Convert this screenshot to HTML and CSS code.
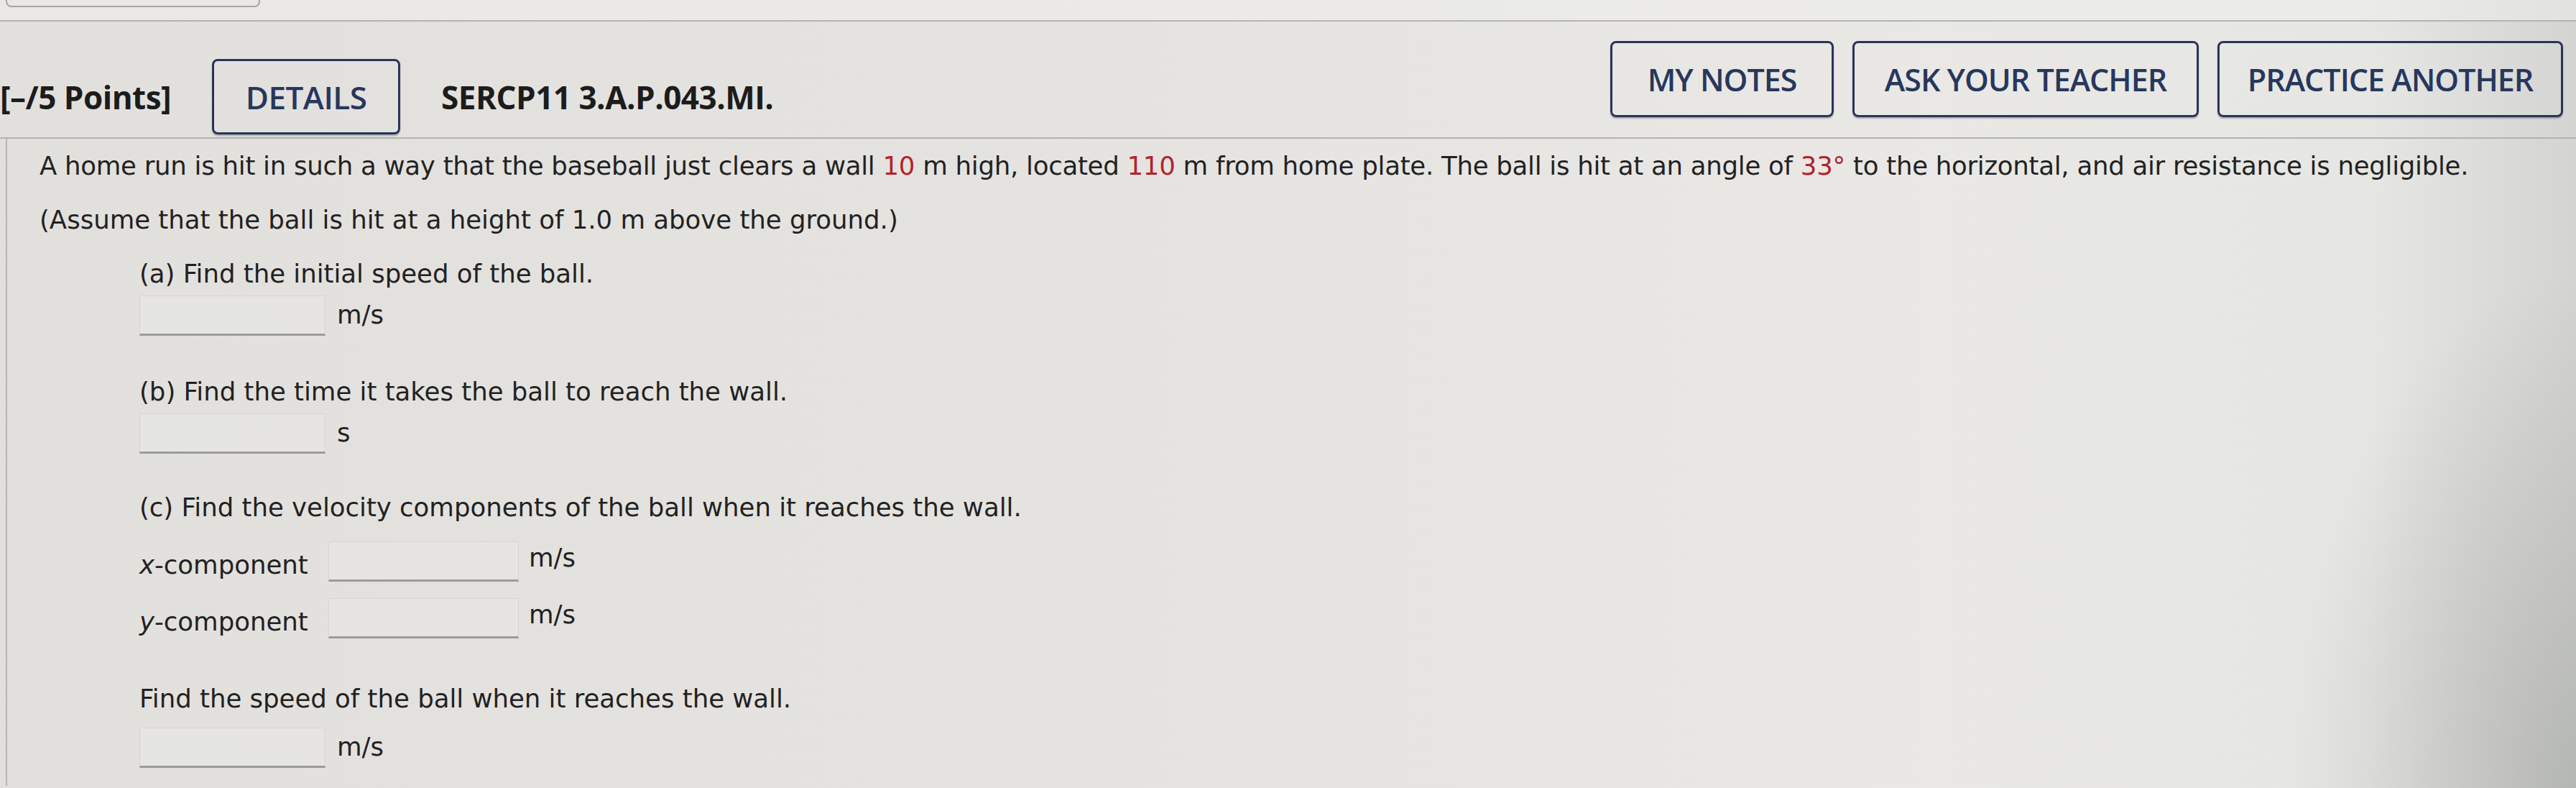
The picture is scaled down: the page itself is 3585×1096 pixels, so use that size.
FILE: index.html
```html
<!DOCTYPE html>
<html lang="en">
<head>
<meta charset="utf-8">
<title>SERCP11 3.A.P.043.MI.</title>
<link rel="stylesheet" href="styles.css">
</head>
<body>
<div class="topbar"><div class="tab"></div></div>
<header class="qhead">
  <div class="qhead-left">
    <span class="points">[–/5 Points]</span>
    <button class="btn btn-details">DETAILS</button>
    <span class="qcode">SERCP11 3.A.P.043.MI.</span>
  </div>
  <div class="qhead-right">
    <button class="btn btn-notes">MY NOTES</button>
    <button class="btn btn-ask">ASK YOUR TEACHER</button>
    <button class="btn btn-practice">PRACTICE ANOTHER</button>
  </div>
</header>
<main class="panel">
  <p class="stem"><span class="line1">A home run is hit in such a way that the baseball just clears a wall <span class="var">10</span> m high, located <span class="var">110</span> m from home plate. The ball is hit at an angle of <span class="var">33°</span> to the horizontal, and air resistance is negligible.</span><br>(Assume that the ball is hit at a height of 1.0 m above the ground.)</p>

  <div class="part part-a">
    <div class="plabel">(a) Find the initial speed of the ball.</div>
    <div class="arow"><span class="ans"></span><span class="unit">m/s</span></div>
  </div>

  <div class="part part-b">
    <div class="plabel">(b) Find the time it takes the ball to reach the wall.</div>
    <div class="arow"><span class="ans"></span><span class="unit">s</span></div>
  </div>

  <div class="part part-c">
    <div class="plabel">(c) Find the velocity components of the ball when it reaches the wall.</div>
    <div class="arow crow"><span class="clabel"><i>x</i>-component</span><span class="ans ans-c"></span><span class="unit unit-c">m/s</span></div>
    <div class="arow crow crow2"><span class="clabel"><i>y</i>-component</span><span class="ans ans-c"></span><span class="unit unit-c">m/s</span></div>
  </div>

  <div class="part part-d">
    <div class="plabel">Find the speed of the ball when it reaches the wall.</div>
    <div class="arow"><span class="ans"></span><span class="unit">m/s</span></div>
  </div>
</main>
</body>
</html>
```

FILE: styles.css
```css
html, body {
  margin: 0;
  padding: 0;
}
body {
  width: 3585px;
  height: 1096px;
  overflow: hidden;
  background:
    radial-gradient(ellipse 400px 720px at 100% 100%, rgba(150,153,151,0.5), rgba(150,153,151,0) 100%),
    linear-gradient(90deg, #e2e0dd 0%, #e5e3e0 40%, #e9e8e5 75%, #e6e6e3 92%, #d4d5d3 100%);
  color: #222222;
  font-family: "DejaVu Sans", Verdana, sans-serif;
}

.topbar {
  height: 28px;
  border-bottom: 2px solid #b4b4b2;
  background: rgba(240,239,237,0.5);
  overflow: hidden;
}
.tab {
  width: 350px;
  height: 12px;
  margin-left: 8px;
  margin-top: -4px;
  border: 2px solid #a6a6a4;
  border-top: none;
  border-radius: 0 0 8px 8px;
}

.qhead {
  display: flex;
  align-items: flex-start;
  height: 161px;
  border-bottom: 2px solid #b2b2b0;
  font-family: "Open Sans", "Liberation Sans", sans-serif;
}
.qhead-left {
  display: flex;
  align-items: center;
  gap: 57px;
  padding-top: 52px;
}
.qhead-right {
  display: flex;
  gap: 26px;
  margin-left: auto;
  padding-right: 18px;
  padding-top: 27px;
}
.points, .qcode {
  font-size: 44px;
  font-weight: 700;
  color: #1c1c1c;
  letter-spacing: -0.5px;
}
.btn {
  height: 106px;
  padding: 0;
  background: transparent;
  border: 3px solid #28355a;
  border-radius: 8px;
  color: #27375d;
  font-family: "Open Sans", "Liberation Sans", sans-serif;
  font-size: 43px;
  font-weight: 600;
  letter-spacing: -1px;
  box-shadow: 0 2px 2px rgba(0,0,0,0.25);
}
.btn-notes { width: 311px; }
.btn-ask { width: 482px; }
.btn-practice { width: 481px; }
.btn-details {
  width: 262px;
  height: 105px;
  font-size: 44px;
  letter-spacing: -0.5px;
}

.panel {
  margin-left: 8px;
  border-left: 2px solid #b7b7b5;
  padding-left: 45px;
  font-size: 35.5px;
  height: 900px;
}
.stem {
  margin: 0;
  line-height: 75px;
  white-space: nowrap;
}
.line1 {
  letter-spacing: -0.25px;
}
.var {
  color: #b3222c;
}
.part {
  margin-left: 139px;
}
.plabel {
  line-height: 60px;
}
.part-a { margin-top: 8px; }
.part-b { margin-top: 48px; }
.part-c { margin-top: 45px; }
.part-d { margin-top: 54px; }
.part-d .plabel { margin-bottom: 10px; }

.arow {
  display: flex;
  align-items: center;
  gap: 16px;
}
.ans {
  display: block;
  width: 257px;
  height: 52px;
  border: 1px solid #d6d5d2;
  border-bottom: 3px solid #9c9c9a;
  background: rgba(232,231,228,0.6);
}
.unit {
  margin-top: -4px;
}
.crow {
  margin-top: 17px;
  gap: 0;
}
.crow2 {
  margin-top: 23px;
}
.clabel {
  width: 263px;
  margin-top: 8px;
}
.ans-c {
  width: 263px;
}
.unit-c {
  margin-left: 14px;
  margin-top: -12px;
}
```
